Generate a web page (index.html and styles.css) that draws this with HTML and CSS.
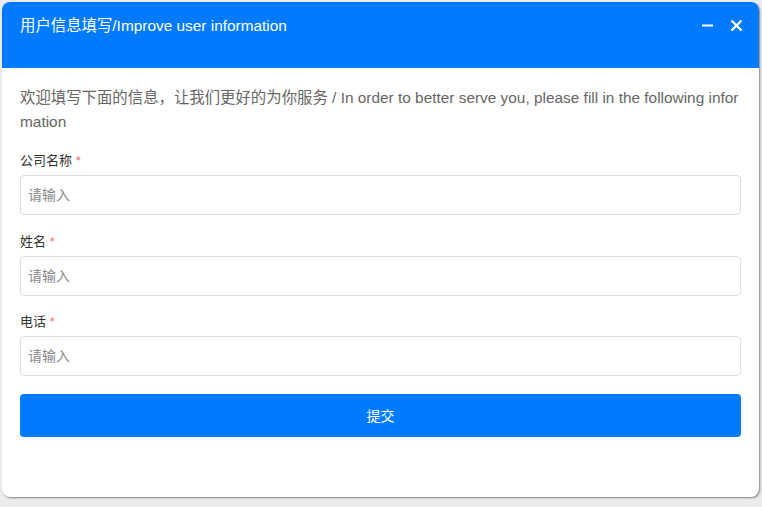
FILE: index.html
```html
<!DOCTYPE html>
<html lang="zh-CN">
<head>
  <meta charset="UTF-8">
  <title>用户信息填写</title>
  <link rel="stylesheet" href="styles.css">
</head>
<body>
  <div class="dialog">
    <div class="dialogHead">
      <span class="dialogTitle">用户信息填写/Improve user information</span>
      <div class="dialogTools">
        <svg width="13" height="13" viewBox="0 0 13 13"><path d="M1 6.5h11" stroke="#fff" stroke-width="2.2"/></svg>
        <svg width="13" height="13" viewBox="0 0 13 13"><path d="M1.5 1.5l10 10M11.5 1.5l-10 10" stroke="#fff" stroke-width="2.2"/></svg>
      </div>
    </div>

    <div class="dialogBody">
      <p class="intro">欢迎填写下面的信息，让我们更好的为你服务 / In order to better serve you, please fill in the following information</p>

      <div class="field">
        <label>公司名称 <i>*</i></label>
        <input type="text" placeholder="请输入">
      </div>
      <div class="field">
        <label>姓名 <i>*</i></label>
        <input type="text" placeholder="请输入">
      </div>
      <div class="field">
        <label>电话 <i>*</i></label>
        <input type="text" placeholder="请输入">
      </div>

      <button class="submit">提交</button>
    </div>
  </div>
</body>
</html>
```

FILE: styles.css
```css
html, body {
  margin: 0;
  padding: 0;
  height: 100%;
  background: #ececec;
  font-family: "Liberation Sans", "Noto Sans CJK SC", sans-serif;
  overflow: hidden;
}
body {
  padding: 2px;
  box-sizing: border-box;
}

.dialog {
  width: 757px;
  height: 495px;
  background: #fff;
  border-radius: 8px;
  overflow: hidden;
  box-shadow: 1px 1px 2px rgba(0,0,0,0.45);
}

.dialogHead {
  height: 66px;
  background: #007bff;
  color: #fff;
  display: flex;
  justify-content: space-between;
  align-items: flex-start;
  padding: 15px 16px 0 18px;
  box-sizing: border-box;
}
.dialogTitle {
  font-size: 15.4px;
  line-height: 18px;
}
.dialogTools {
  display: flex;
  gap: 16px;
  padding-top: 2px;
}
.dialogTools svg {
  display: block;
}

.dialogBody {
  padding: 18px 18px 0 18px;
}
.intro {
  margin: 0 0 18px;
  font-size: 15.4px;
  line-height: 24px;
  color: #666;
  word-break: break-all;
}

.field {
  margin-bottom: 17.5px;
}
.field label {
  display: block;
  font-size: 13px;
  line-height: 18px;
  color: #333;
  margin-bottom: 5px;
}
.field label i {
  font-style: normal;
  color: #f56c6c;
}
.field input {
  display: block;
  width: 100%;
  height: 40px;
  box-sizing: border-box;
  border: 1px solid #dcdcdc;
  border-radius: 4px;
  padding: 0 7px;
  font-size: 14px;
  font-family: inherit;
  outline: none;
}
.field input::placeholder {
  color: #888;
}

.submit {
  display: block;
  width: 100%;
  height: 43px;
  border: none;
  border-radius: 4px;
  background: #007bff;
  color: #fff;
  font-size: 14px;
  font-family: inherit;
  cursor: pointer;
}
```
